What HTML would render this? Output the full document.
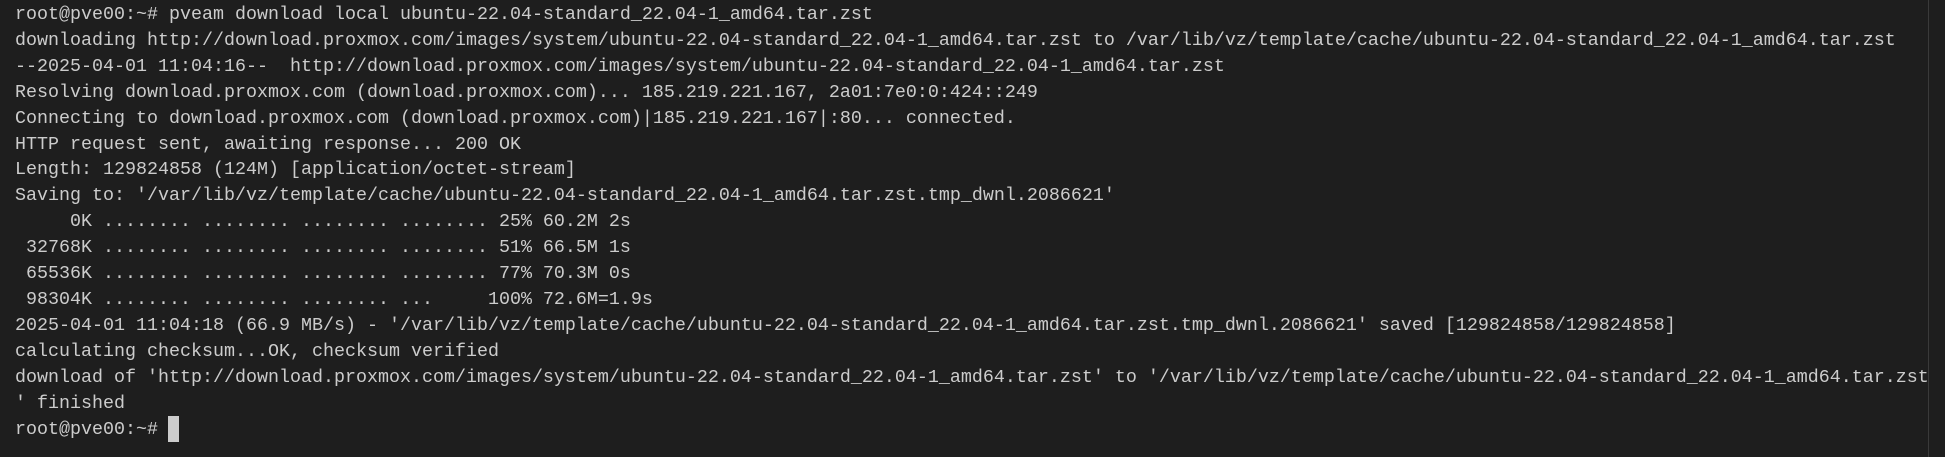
<!DOCTYPE html>
<html><head><meta charset="utf-8"><style>
html,body{margin:0;padding:0;background:#1e1e1e;}
body{width:1945px;height:457px;overflow:hidden;position:relative;}
pre{position:absolute;left:15px;top:2px;margin:0;font-family:"Liberation Mono",monospace;font-size:18.33px;line-height:25.9px;color:#cccccc;white-space:pre;}
.cur{position:absolute;left:168px;top:416px;width:11px;height:26px;background:#cccccc;}
.vl{position:absolute;left:1928px;top:0;width:1px;height:457px;background:#3a3a3a;}
</style></head><body>
<pre>root@pve00:~# pveam download local ubuntu-22.04-standard_22.04-1_amd64.tar.zst
downloading http://download.proxmox.com/images/system/ubuntu-22.04-standard_22.04-1_amd64.tar.zst to /var/lib/vz/template/cache/ubuntu-22.04-standard_22.04-1_amd64.tar.zst
--2025-04-01 11:04:16--  http://download.proxmox.com/images/system/ubuntu-22.04-standard_22.04-1_amd64.tar.zst
Resolving download.proxmox.com (download.proxmox.com)... 185.219.221.167, 2a01:7e0:0:424::249
Connecting to download.proxmox.com (download.proxmox.com)|185.219.221.167|:80... connected.
HTTP request sent, awaiting response... 200 OK
Length: 129824858 (124M) [application/octet-stream]
Saving to: '/var/lib/vz/template/cache/ubuntu-22.04-standard_22.04-1_amd64.tar.zst.tmp_dwnl.2086621'
     0K ........ ........ ........ ........ 25% 60.2M 2s
 32768K ........ ........ ........ ........ 51% 66.5M 1s
 65536K ........ ........ ........ ........ 77% 70.3M 0s
 98304K ........ ........ ........ ...     100% 72.6M=1.9s
2025-04-01 11:04:18 (66.9 MB/s) - '/var/lib/vz/template/cache/ubuntu-22.04-standard_22.04-1_amd64.tar.zst.tmp_dwnl.2086621' saved [129824858/129824858]
calculating checksum...OK, checksum verified
download of 'http://download.proxmox.com/images/system/ubuntu-22.04-standard_22.04-1_amd64.tar.zst' to '/var/lib/vz/template/cache/ubuntu-22.04-standard_22.04-1_amd64.tar.zst
' finished
root@pve00:~# </pre>
<div class="cur"></div>
<div class="vl"></div>
</body></html>
